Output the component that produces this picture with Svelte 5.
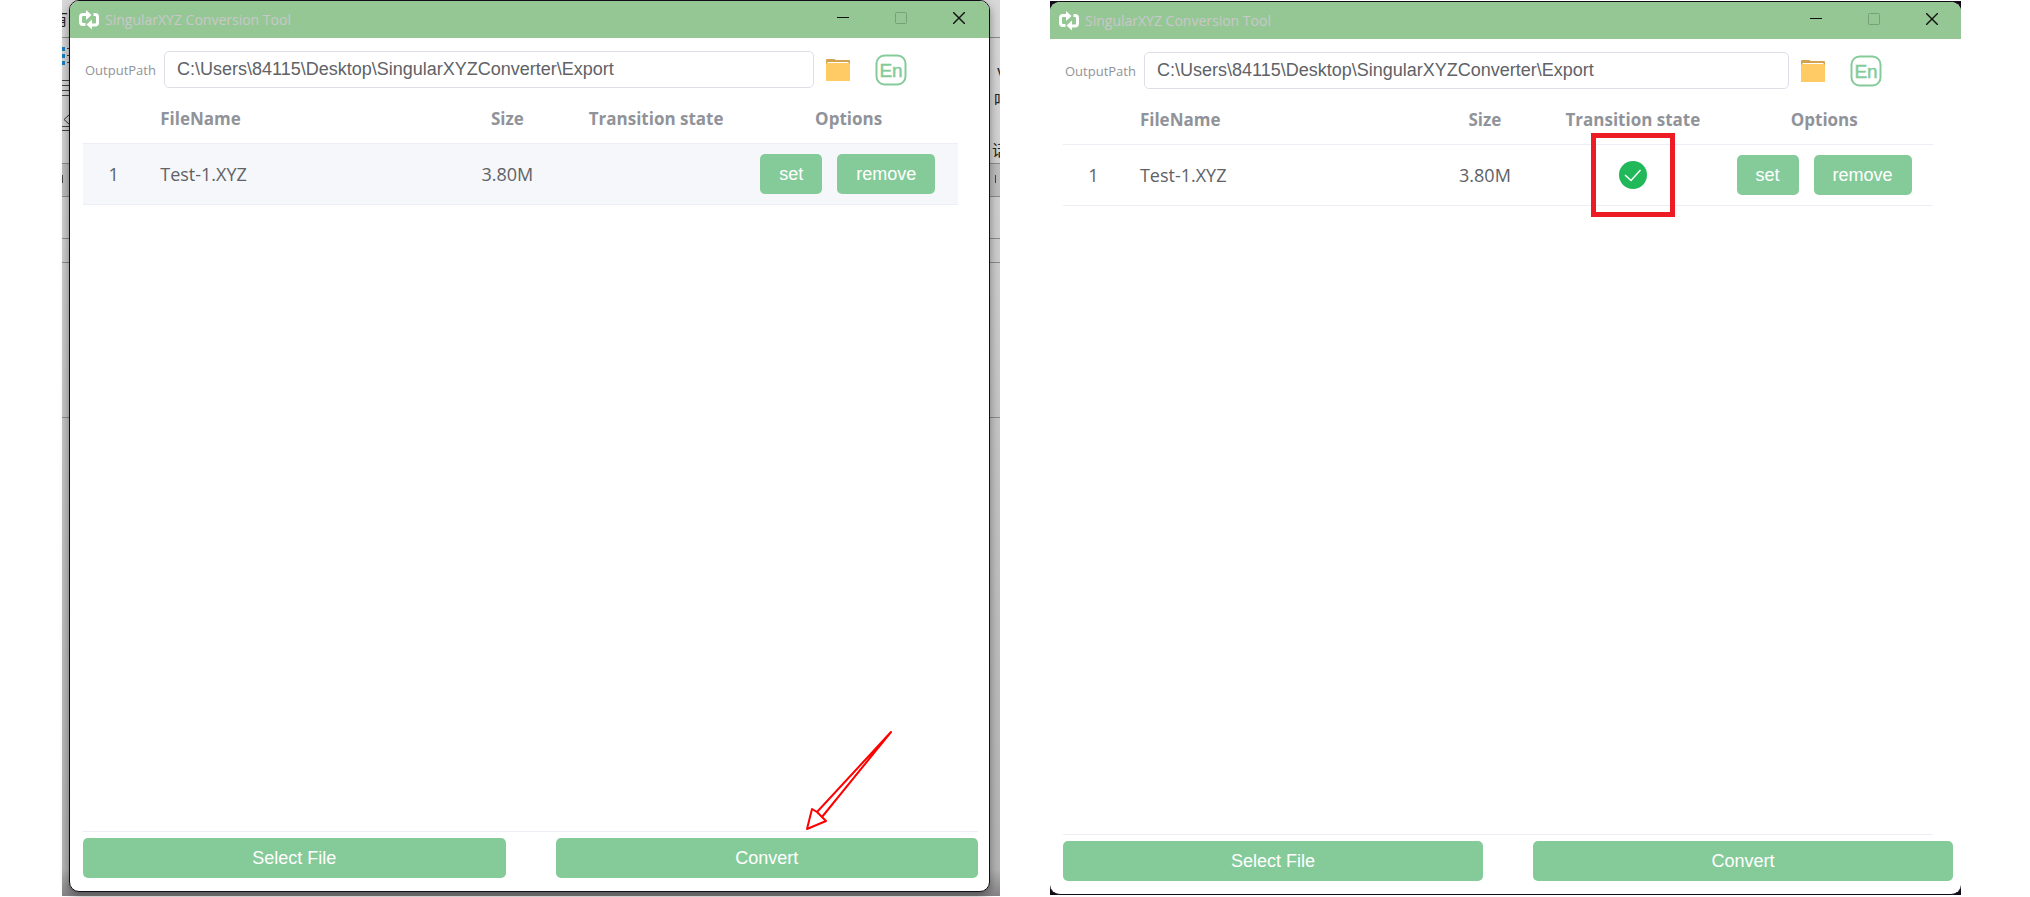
<script lang="ts">
  type Row = { name: string; size: string; done: boolean };
  type Tool = { id: string; hovered: boolean; rows: Row[] };

  const outputPath = 'C:\\Users\\84115\\Desktop\\SingularXYZConverter\\Export';

  const tools: Tool[] = [
    { id: 'before', hovered: true, rows: [{ name: 'Test-1.XYZ', size: '3.80M', done: false }] },
    { id: 'after', hovered: false, rows: [{ name: 'Test-1.XYZ', size: '3.80M', done: true }] }
  ];

  // hairlines of the document behind the first window
  const rules = [37, 163, 196, 238, 262, 417];
</script>

<svelte:head>
  <title>SingularXYZ Conversion Tool</title>
</svelte:head>

<main>
  {#each tools as tool}
    <section class="shot {tool.id}">
      {#if tool.id === 'before'}
        <div class="backdrop" aria-hidden="true">
          <div class="band"></div>
          {#each rules as y}
            <i style="top: {y}px"></i>
          {/each}
          <svg class="edge" width="7" height="190" viewBox="0 0 7 190">
            <path d="M0 47h3v4H0zM0 54h3v4H0zM0 61h3v4H0z" fill="#1b7fc0" />
            <path d="M5 48.500h2M5 55.500h2M5 62.500h2M0 80.500h7M0 85.500h7M0 90.500h7M0 95.500h7M0 126.500h7M0 130.500h7M.5 175v8" stroke="#444" />
            <path d="M7 115l-5 4.500 5 4.500" stroke="#333" fill="none" />
          </svg>
          <svg class="edge far" width="10" height="190" viewBox="0 0 10 190">
            <path d="M5.500 175v8" stroke="#444" />
          </svg>
          <span class="glyph first">有</span>
          <span class="glyph second">v</span>
          <span class="glyph third">吗</span>
          <span class="glyph fourth">话</span>
        </div>
      {/if}

      <div class="window">
        <header>
          <svg width="21" height="20" viewBox="0 0 21 20">
            <path d="M6.500 14.500H4Q1.500 14.500 1.500 12V7Q1.500 4.500 4 4.500H8M14.500 4.500H16Q18.500 4.500 18.500 7v5.500Q18.500 15 16 15H12" fill="none" stroke="#fff" stroke-width="3" />
            <path d="M7 0l5.500 5L7 10zM13 9.500V19.500L7.500 14.500z" fill="#fff" />
          </svg>
          <h1>SingularXYZ Conversion Tool</h1>
          <div class="controls">
            <button aria-label="Minimize"><svg width="12" height="12" viewBox="0 0 12 12"><path d="M0 5.500h12" /></svg></button>
            <button aria-label="Maximize" disabled><svg width="12" height="12" viewBox="0 0 12 12"><rect x=".5" y=".5" width="11" height="11" rx="1" /></svg></button>
            <button aria-label="Close"><svg width="12" height="12" viewBox="0 0 12 12"><path d="M0 0l12 12M12 0L0 12" stroke-width="1.400" /></svg></button>
          </div>
        </header>

        <div class="content">
          <div class="toolbar">
            <label for="path-{tool.id}">OutputPath</label>
            <input id="path-{tool.id}" type="text" value={outputPath} />
            <button class="icon" aria-label="Open folder">
              <svg width="24" height="24" viewBox="0 0 24 24">
                <path d="M1 1h7l2 1h13q1 0 1 1v4H0V2q0-1 1-1z" fill="#d3a251" />
                <path d="M1 5l1-1h20l1 1v3H1z" fill="#fff" />
                <path d="M0 6l1-1h22l1 1v17H0z" fill="#ffcb64" />
              </svg>
            </button>
            <button class="icon" aria-label="Language">
              <svg width="32" height="32" viewBox="0 0 32 32">
                <rect x="1.500" y="1.500" width="29" height="29" rx="8" fill="none" stroke="#85cb9a" stroke-width="2" />
                <text x="16" y="23">En</text>
              </svg>
            </button>
          </div>

          <table>
            <colgroup>
              <col class="index" /><col class="name" /><col class="size" /><col class="state" /><col class="options" />
            </colgroup>
            <thead>
              <tr><th></th><th class="start">FileName</th><th>Size</th><th>Transition state</th><th>Options</th></tr>
            </thead>
            <tbody>
              {#each tool.rows as row, i}
                <tr class:hovered={tool.hovered}>
                  <td>{i + 1}</td>
                  <td class="start">{row.name}</td>
                  <td>{row.size}</td>
                  <td>
                    {#if row.done}
                      <div class="status">
                        <svg width="28" height="28" viewBox="0 0 28 28">
                          <circle cx="14" cy="14" r="14" fill="#21b85a" />
                          <path d="M6 14l6 5.500L21.500 9" fill="none" stroke="#fff" stroke-width="1.500" />
                        </svg>
                      </div>
                    {/if}
                  </td>
                  <td>
                    <div class="actions">
                      <button class="action">set</button>
                      <button class="action">remove</button>
                    </div>
                  </td>
                </tr>
              {/each}
            </tbody>
          </table>

          <hr />
          <footer>
            <button class="action">Select File</button>
            <button class="action">Convert</button>
            {#if tool.id === 'before'}
              <svg class="arrow" width="90" height="102" viewBox="0 0 90 102">
                <path d="M87 3L13 83 8 80 3 100 22 92 18 88z M13 83l5 5" />
              </svg>
            {/if}
          </footer>
        </div>
      </div>
    </section>
  {/each}
</main>

<style>
  :global(body) {
    background: #fff;
  }

  main {
    display: grid;
    grid-template-columns: 938fr 911fr;
    gap: 50px;
    box-sizing: border-box;
    min-height: 100vh;
    padding: 0 69px 1px 62px;
    font-family: 'Open Sans', 'Noto Sans', sans-serif;
    color: #606266;
  }

  .shot {
    position: relative;
    display: flex;
  }

  .before {
    padding: 0 10px 4px 7px;
    background: linear-gradient(#d8d8d8, #c4c4c4 50%, #b4b4b4 97%, #858385);
  }

  .after {
    padding: 1px 0;
  }

  /* dark desktop showing in the rounded corners */
  .after::before {
    content: '';
    position: absolute;
    inset: 1px 0;
    background: #120c18;
  }

  .window {
    position: relative;
    display: flex;
    flex: 1;
    flex-direction: column;
    min-width: 0;
    overflow: hidden;
    border: 1px solid #120c18;
    border-radius: 10px;
    background: #fff;
  }

  .before .window {
    box-shadow: 0 4px 10px rgba(0, 0, 0, 0.4);
  }

  .after .window {
    border-width: 1px 0;
  }

  .backdrop {
    position: absolute;
    inset: 0;
    overflow: hidden;
  }

  .backdrop i {
    position: absolute;
    right: 0;
    left: 0;
    height: 1px;
    background: #8b8b8b;
  }

  .band {
    position: absolute;
    top: 163px;
    right: 0;
    left: 0;
    height: 33px;
    background: #bdbdbd;
  }

  .edge {
    position: absolute;
    top: 0;
    left: 0;
  }

  .far {
    right: 0;
    left: auto;
  }

  .glyph {
    position: absolute;
    font: 16px/20px 'Noto Sans CJK SC', sans-serif;
    color: #222;
  }

  .first {
    top: 8px;
    left: -10px;
  }

  .second {
    top: 60px;
    left: 935px;
  }

  .third {
    top: 89px;
    left: 932px;
  }

  .fourth {
    top: 139px;
    left: 930px;
  }

  header {
    display: flex;
    align-items: center;
    height: 37px;
    padding-left: 9px;
    background: #95c795;
  }

  .before header {
    padding-right: 1px;
  }

  h1 {
    flex: 1;
    margin: 0 0 0 5px;
    font-size: 14px;
    font-weight: 400;
    line-height: 20px;
    color: #c8c8cb;
  }

  button {
    padding: 0;
    border: 0;
    background: none;
    cursor: pointer;
  }

  .controls {
    display: flex;
  }

  .controls button {
    width: 58px;
    height: 37px;
  }

  .controls svg {
    fill: none;
    stroke: #111;
  }

  .controls button:disabled svg {
    stroke: #78a078;
  }

  .content {
    display: flex;
    flex: 1;
    flex-direction: column;
    padding: 13px 11px 13px 13px;
  }

  .after .content {
    padding-right: 8px;
  }

  .toolbar {
    display: flex;
    align-items: center;
    padding: 0 71px 0 2px;
  }

  label {
    width: 79px;
    font-size: 13px;
    line-height: 20px;
    color: #909399;
  }

  input {
    flex: 1;
    box-sizing: border-box;
    min-width: 0;
    height: 37px;
    padding: 0 12px;
    border: 1px solid #dcdfe6;
    border-radius: 5px;
    font: 18px 'Liberation Sans', Arial, sans-serif;
    color: #606266;
  }

  .icon {
    margin-left: 12px;
  }

  .icon + .icon {
    margin-left: 25px;
  }

  .icon svg {
    display: block;
  }

  .icon text {
    font: 19px 'Liberation Sans', Arial, sans-serif;
    text-anchor: middle;
    fill: #85cb9a;
    stroke: #85cb9a;
    stroke-width: 0.5;
  }

  table {
    width: calc(100% - 20px);
    table-layout: fixed;
    border-collapse: collapse;
    font-size: 18px;
    line-height: 24px;
  }

  .index {
    width: 7%;
  }

  .size {
    width: 15%;
  }

  .state {
    width: 19%;
  }

  .options {
    width: 25%;
  }

  th,
  td {
    padding: 0;
    border-bottom: 1px solid #ebeef5;
    text-align: center;
  }

  th {
    height: 49px;
    padding-top: 6px;
    font-size: 17px;
    color: #909399;
  }

  td {
    height: 60px;
  }

  .start {
    padding-left: 16px;
    text-align: left;
  }

  .hovered {
    background: #f5f7fa;
  }

  .status {
    display: inline-block;
    border: 5px solid #ed1c24;
    padding: 23px;
    margin: -12px 0;
    vertical-align: middle;
  }

  .status svg {
    display: block;
  }

  .actions {
    display: flex;
    gap: 15px;
    padding-left: 21px;
  }

  .action {
    height: 40px;
    padding: 0 19px;
    border-radius: 5px;
    background: #85cb9a;
    font: 18px 'Liberation Sans', Arial, sans-serif;
    color: #fff;
  }

  hr {
    width: 100%;
    margin: auto 0 6px;
    border: 0;
    border-top: 1px solid #ebeef5;
  }

  .after hr {
    width: calc(100% - 20px);
  }

  footer {
    position: relative;
    display: flex;
    gap: 50px;
  }

  footer .action {
    flex: 1;
  }

  .arrow {
    position: absolute;
    right: 84px;
    bottom: 47px;
    fill: #fff;
    stroke: #f00;
    stroke-width: 2;
    stroke-linejoin: round;
  }
</style>
